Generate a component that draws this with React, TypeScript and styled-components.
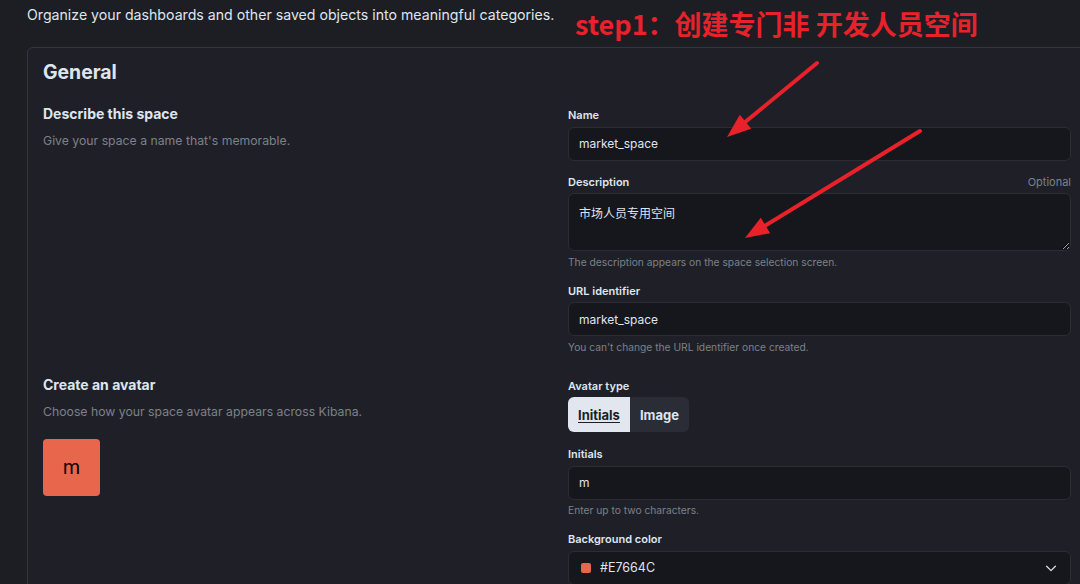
import React from "react";
import styled, { createGlobalStyle } from "styled-components";

const Global = createGlobalStyle`
  html, body { margin: 0; padding: 0; background: #1d1e24; }
  body { width: 1080px; height: 584px; overflow: hidden; font-family: Inter, "Noto Sans", sans-serif; }
  * { box-sizing: border-box; }
`;

const Page = styled.div`
  position: relative;
  width: 1080px;
  height: 584px;
  overflow: hidden;
  padding: 5px 0 0 27px;
  color: #dfe5ef;
`;

const Intro = styled.p`
  margin: 0 0 22px;
  font-size: 14.15px;
  line-height: 20px;
  color: #dfe5ef;
`;

const Panel = styled.section`
  width: 1060px;
  border: 1px solid #343741;
  border-radius: 6px;
  background: #1f2027;
  padding: 12px 15px 20px;
`;

const PanelTitle = styled.h2`
  margin: 0 0 20px;
  font-size: 19.4px;
  line-height: 24px;
  font-weight: 700;
  color: #dfe5ef;
`;

const Group = styled.div`
  display: grid;
  grid-template-columns: 1fr 503px;
  column-gap: 24px;
  & + & { margin-top: 20px; }
`;

const GroupText = styled.div`
  display: flex;
  flex-direction: column;
  gap: 8px;
`;

const GroupTitle = styled.h3`
  margin: 0;
  font-size: 14px;
  line-height: 20px;
  font-weight: 700;
  color: #dfe5ef;
`;

const GroupDesc = styled.p`
  margin: 0;
  font-size: 12.25px;
  line-height: 18px;
  color: #7c808a;
`;

const Fields = styled.div`
  padding-top: 3px;
  display: flex;
  flex-direction: column;
`;

const Row = styled.div`
  display: flex;
  flex-direction: column;
  & + & { margin-top: 13px; }
`;

const LabelLine = styled.div`
  display: flex;
  justify-content: space-between;
  align-items: baseline;
  margin-bottom: 3.5px;
`;

const Label = styled.label`
  font-size: 11px;
  line-height: 16px;
  font-weight: 600;
  color: #dfe5ef;
`;

const Optional = styled.span`
  font-size: 11px;
  line-height: 16px;
  color: #7c808a;
`;

const fieldBase = `
  width: 100%;
  background: #16171c;
  border: 1px solid #2b2d35;
  border-radius: 6px;
  color: #dfe5ef;
  font-family: Inter, "Noto Sans CJK SC", sans-serif;
  font-size: 12px;
  outline: none;
`;

const TextInput = styled.input`
  ${fieldBase}
  height: 34px;
  padding: 0 10px;
`;

const TextArea = styled.textarea`
  ${fieldBase}
  height: 58px;
  padding: 11px 10px;
  line-height: 18px;
  resize: vertical;
  display: block;
`;

const Help = styled.div`
  margin-top: 2.5px;
  font-size: 10.25px;
  line-height: 16px;
  color: #7c808a;
`;

const ButtonGroup = styled.div`
  display: flex;
  height: 35px;
  margin-bottom: 1px;
  width: fit-content;
  border-radius: 6px;
  overflow: hidden;
  background: #2b2d36;
`;

const ToggleButton = styled.button<{ $active?: boolean }>`
  border: 0;
  height: 35px;
  padding: 0 10px;
  font-family: Inter, sans-serif;
  font-size: 13px;
  font-weight: 700;
  background: ${(p) => (p.$active ? "#e1e6ef" : "#2b2d36")};
  color: ${(p) => (p.$active ? "#1d1e24" : "#dfe5ef")};
  text-decoration: ${(p) => (p.$active ? "underline" : "none")};
  text-underline-offset: 2px;
`;

const Avatar = styled.div<{ $color: string }>`
  margin-top: 10px;
  width: 57px;
  height: 57px;
  border-radius: 4px;
  background: ${(p) => p.$color};
  color: #000;
  font-size: 20px;
  display: flex;
  align-items: center;
  justify-content: center;
`;

const Select = styled.div`
  ${fieldBase}
  height: 34px;
  padding: 0 12px 0 12px;
  display: flex;
  align-items: center;
  gap: 9px;
`;

const Swatch = styled.span<{ $color: string }>`
  width: 10px;
  height: 10px;
  border-radius: 2px;
  background: ${(p) => p.$color};
`;

const SelectValue = styled.span`
  flex: 1;
  font-size: 12.5px;
`;

const Annotation = styled.div`
  position: absolute;
  left: 575px;
  top: 5px;
  font-family: "Noto Sans CJK SC", "Noto Sans", sans-serif;
  font-weight: 700;
  font-size: 27px;
  line-height: 38px;
  color: #e8212b;
  white-space: pre;
`;

const Overlay = styled.svg`
  position: absolute;
  left: 0;
  top: 0;
  pointer-events: none;
`;

function Arrow({ x1, y1, x2, y2 }: { x1: number; y1: number; x2: number; y2: number }) {
  const a = Math.atan2(y2 - y1, x2 - x1);
  const len = 24;
  const w = 9;
  const bx = x2 - len * Math.cos(a);
  const by = y2 - len * Math.sin(a);
  const px = -Math.sin(a) * w;
  const py = Math.cos(a) * w;
  const sx = x2 - (len - 4) * Math.cos(a);
  const sy = y2 - (len - 4) * Math.sin(a);
  return (
    <g>
      <line x1={x1} y1={y1} x2={sx} y2={sy} stroke="#e8212b" strokeWidth={4} strokeLinecap="round" />
      <polygon points={`${x2},${y2} ${bx + px},${by + py} ${bx - px},${by - py}`} fill="#e8212b" />
    </g>
  );
}

function Chevron() {
  return (
    <svg width="14" height="14" viewBox="0 0 16 16" fill="none">
      <path d="M3 6l5 5 5-5" stroke="#dfe5ef" strokeWidth="1.4" strokeLinecap="round" strokeLinejoin="round" />
    </svg>
  );
}

export default function App() {
  return (
    <Page>
      <Global />
      <Intro>Organize your dashboards and other saved objects into meaningful categories.</Intro>
      <Panel>
        <PanelTitle>General</PanelTitle>
        <Group>
          <GroupText>
            <GroupTitle>Describe this space</GroupTitle>
            <GroupDesc>Give your space a name that's memorable.</GroupDesc>
          </GroupText>
          <Fields>
            <Row>
              <LabelLine><Label>Name</Label></LabelLine>
              <TextInput readOnly value="market_space" />
            </Row>
            <Row>
              <LabelLine><Label>Description</Label><Optional>Optional</Optional></LabelLine>
              <TextArea readOnly value="市场人员专用空间" />
              <Help>The description appears on the space selection screen.</Help>
            </Row>
            <Row>
              <LabelLine><Label>URL identifier</Label></LabelLine>
              <TextInput readOnly value="market_space" />
              <Help>You can't change the URL identifier once created.</Help>
            </Row>
          </Fields>
        </Group>
        <Group>
          <GroupText>
            <GroupTitle>Create an avatar</GroupTitle>
            <GroupDesc>Choose how your space avatar appears across Kibana.</GroupDesc>
            <Avatar $color="#E7664C">m</Avatar>
          </GroupText>
          <Fields>
            <Row>
              <LabelLine><Label>Avatar type</Label></LabelLine>
              <ButtonGroup>
                <ToggleButton $active>Initials</ToggleButton>
                <ToggleButton>Image</ToggleButton>
              </ButtonGroup>
            </Row>
            <Row>
              <LabelLine><Label>Initials</Label></LabelLine>
              <TextInput readOnly value="m" />
              <Help>Enter up to two characters.</Help>
            </Row>
            <Row>
              <LabelLine><Label>Background color</Label></LabelLine>
              <Select>
                <Swatch $color="#E7664C" />
                <SelectValue>#E7664C</SelectValue>
                <Chevron />
              </Select>
            </Row>
          </Fields>
        </Group>
      </Panel>
      <Annotation>step1：创建专门非 开发人员空间</Annotation>
      <Overlay width="1080" height="584" viewBox="0 0 1080 584">
        <Arrow x1={817} y1={63} x2={727} y2={137} />
        <Arrow x1={920} y1={131} x2={745} y2={238} />
      </Overlay>
    </Page>
  );
}
